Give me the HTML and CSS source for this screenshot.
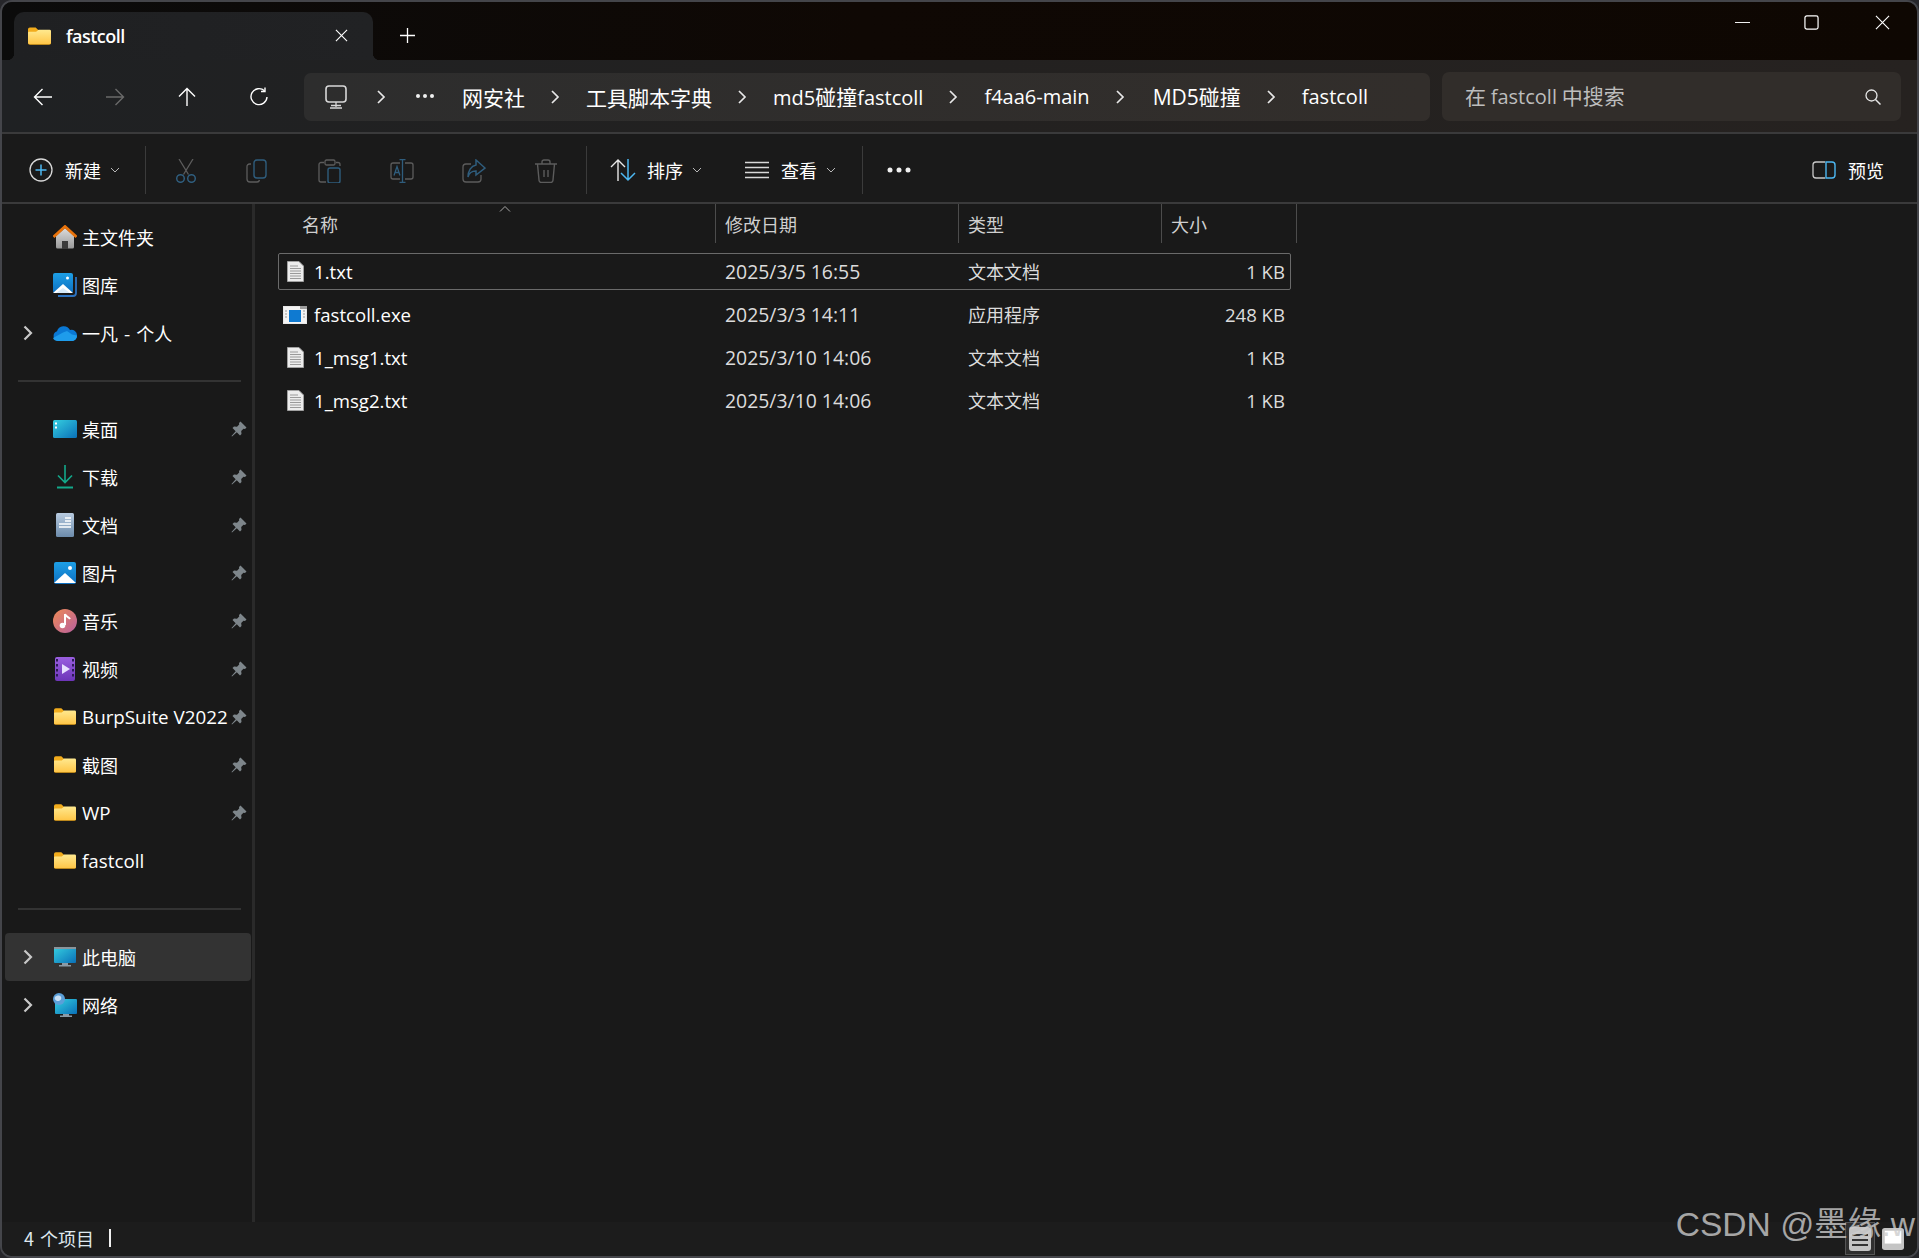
FILE: index.html
```html
<!DOCTYPE html>
<html lang="zh-CN">
<head>
<meta charset="utf-8">
<title>fastcoll</title>
<link rel="stylesheet" href="styles.css">
</head>
<body>
<svg class="defs" aria-hidden="true">
  <defs>
    <linearGradient id="gFolder" x1="0" y1="0" x2="0" y2="1"><stop offset="0" stop-color="#ffe98f"/><stop offset="1" stop-color="#ffc648"/></linearGradient>
    <linearGradient id="gHome" x1="0" y1="0" x2="0" y2="1"><stop offset="0" stop-color="#dcdcdc"/><stop offset="1" stop-color="#9a9a9a"/></linearGradient>
    <linearGradient id="gBlue" x1="0" y1="0" x2="0" y2="1"><stop offset="0" stop-color="#1d9fe6"/><stop offset="1" stop-color="#0d6fc0"/></linearGradient>
    <linearGradient id="gDesk" x1="0" y1="0" x2="1" y2="1"><stop offset="0" stop-color="#35cfe0"/><stop offset="1" stop-color="#0a70b8"/></linearGradient>
    <linearGradient id="gDoc" x1="0" y1="0" x2="0" y2="1"><stop offset="0" stop-color="#b8cbe0"/><stop offset="1" stop-color="#6c8bab"/></linearGradient>
    <linearGradient id="gMusic" x1="0" y1="0" x2="1" y2="1"><stop offset="0" stop-color="#ee8a55"/><stop offset="1" stop-color="#b85f9f"/></linearGradient>
    <linearGradient id="gVideo" x1="0" y1="0" x2="0" y2="1"><stop offset="0" stop-color="#9a5fe0"/><stop offset="1" stop-color="#6d35b8"/></linearGradient>
    <symbol id="folder" viewBox="0 0 24 18">
      <path d="M0 2a2 2 0 0 1 2-2h6l3 3h11a2 2 0 0 1 2 2v11a2 2 0 0 1-2 2H2a2 2 0 0 1-2-2z" fill="#f2ac1c"/>
      <path d="M0 5.500q0-1 1-1h7.500l2.500-2h11.500q1.500 0 1.500 1.500V16a1.500 1.500 0 0 1-1.500 1.300H1.500A1.500 1.500 0 0 1 0 16z" fill="url(#gFolder)"/>
    </symbol>
    <symbol id="pin" viewBox="0 0 16 16">
      <path d="M9.500.5l6 6L14 8l-1.500-.2-2.300 2.200.3 3L9 14.500l-3.200-3.200L1 15.500l-.5-.5 4.200-4.800L1.500 7 3 5.500l3 .3 2.200-2.300L8 2z" fill="#7e868b"/>
    </symbol>
    <symbol id="doc" viewBox="0 0 17 21">
      <path d="M.5.500h11.500l4.500 4.500v15.500H.5z" fill="#ececec" stroke="#a0a0a0"/>
      <path d="M3 5h8M3 7.500h11M3 10h11M3 12.500h11M3 15h11M3 17.500h11" stroke="#9a9a9a"/>
    </symbol>
    <symbol id="chev" viewBox="0 0 10 16"><path d="M2 2l6 6-6 6" fill="none" stroke="currentColor" stroke-width="1.700"/></symbol>
    <symbol id="chevb" viewBox="0 0 10 16"><path d="M1.500 1.500l6.500 6.500-6.500 6.500" fill="none" stroke="currentColor" stroke-width="2.200"/></symbol>
    <symbol id="drop" viewBox="0 0 10 6"><path d="M1 1l4 4 4-4" fill="none" stroke="currentColor" stroke-width="1"/></symbol>
  </defs>
</svg>

<div class="window">
  <header class="tabstrip">
    <div class="tab">
      <svg class="tab-folder"><use href="#folder"/></svg>
      <span class="tab-title">fastcoll</span>
      <svg class="tab-close" viewBox="0 0 14 14"><path d="M1 1l12 12M13 1L1 13" stroke="#fff" stroke-width="1.200"/></svg>
    </div>
    <svg class="tab-plus" viewBox="0 0 16 16"><path d="M8 0v16M0 8h16" stroke="#fff" stroke-width="1.400"/></svg>
    <div class="winctl">
      <svg class="wc" viewBox="0 0 16 16"><path d="M0 8h16" stroke="#fff" stroke-width="1"/></svg>
      <svg class="wc wc-max" viewBox="0 0 16 16"><rect x="1" y="1" width="14" height="14" rx="2" fill="none" stroke="#fff" stroke-width="1.300"/></svg>
      <svg class="wc" viewBox="0 0 16 16"><path d="M1 1l14 14M15 1L1 15" stroke="#fff" stroke-width="1.200"/></svg>
    </div>
  </header>

  <nav class="navrow">
    <div class="navbtns">
      <svg class="nav" viewBox="0 0 20 20"><path d="M19 10H1.500M9.500 2l-8 8 8 8" fill="none" stroke="#fff" stroke-width="1.400"/></svg>
      <svg class="nav" viewBox="0 0 20 20"><path d="M1 10h17.500M10.500 2l8 8-8 8" fill="none" stroke="#6a6a6a" stroke-width="1.400"/></svg>
      <svg class="nav" viewBox="0 0 20 20"><path d="M10 19V1.500M2 9.500l8-8 8 8" fill="none" stroke="#fff" stroke-width="1.400"/></svg>
      <svg class="nav" viewBox="0 0 20 20"><path d="M15.500 3.800A8 8 0 1 0 18 10" fill="none" stroke="#fff" stroke-width="1.400"/><path d="M16 .5v4h-4" fill="none" stroke="#fff" stroke-width="1.400"/></svg>
    </div>
    <div class="addr">
      <svg class="addr-pc" viewBox="0 0 22 24"><rect x="1" y="1" width="20" height="16" rx="3" fill="none" stroke="#d8d8d8" stroke-width="1.600"/><path d="M11 17v5M5 23h12M6 20.500h10" stroke="#d8d8d8" stroke-width="1.300"/></svg>
      <svg class="crumb-chev"><use href="#chev"/></svg>
      <svg class="addr-dots" viewBox="0 0 18 4"><circle cx="2" cy="2" r="2" fill="#f0f0f0"/><circle cx="9" cy="2" r="2" fill="#f0f0f0"/><circle cx="16" cy="2" r="2" fill="#f0f0f0"/></svg>
      <span class="crumb">网安社</span>
      <svg class="crumb-chev"><use href="#chev"/></svg>
      <span class="crumb">工具脚本字典</span>
      <svg class="crumb-chev"><use href="#chev"/></svg>
      <span class="crumb"><span class="lat-l">md5</span>碰撞<span class="lat-l">fastcoll</span></span>
      <svg class="crumb-chev"><use href="#chev"/></svg>
      <span class="crumb lat-l">f4aa6-main</span>
      <svg class="crumb-chev"><use href="#chev"/></svg>
      <span class="crumb crumb-md"><span class="lat-m">MD5</span>碰撞</span>
      <svg class="crumb-chev"><use href="#chev"/></svg>
      <span class="crumb lat-l">fastcoll</span>
    </div>
    <div class="search">
      <span class="search-text">在 <span class="lat-l">fastcoll</span> 中搜索</span>
      <svg class="search-ic" viewBox="0 0 16 16"><circle cx="6.500" cy="6.500" r="5.500" fill="none" stroke="#e6e6e6" stroke-width="1.300"/><path d="M10.500 10.500l5 5" stroke="#e6e6e6" stroke-width="1.500"/></svg>
    </div>
  </nav>

  <div class="toolbar">
    <div class="tb-new">
      <svg class="tb-ic-new" viewBox="0 0 24 24"><circle cx="12" cy="12" r="11" fill="none" stroke="#d8d8d8" stroke-width="1.300"/><path d="M12 6.500v11M6.500 12h11" stroke="#4db8f2" stroke-width="1.500"/></svg>
      <span class="tb-label">新建</span>
      <svg class="tb-drop"><use href="#drop"/></svg>
    </div>
    <span class="tb-sep"></span>
    <div class="tb-icons">
      <svg class="tb-ic" viewBox="0 0 24 24"><path d="M5 0l9.500 15.500M19 0L9.500 15.500" stroke="#5c5c5c" stroke-width="1.300"/><circle cx="6.500" cy="19.500" r="3.800" fill="none" stroke="#2f5d7d" stroke-width="1.500"/><circle cx="17.500" cy="19.500" r="3.800" fill="none" stroke="#2f5d7d" stroke-width="1.500"/></svg>
      <svg class="tb-ic" viewBox="0 0 24 24"><path d="M5 5H3.500A2.500 2.500 0 0 0 1 7.500V20a3 3 0 0 0 3 3h7a2.500 2.500 0 0 0 2.500-2" fill="none" stroke="#5c5c5c" stroke-width="1.300"/><rect x="8" y="1" width="12" height="18" rx="3" fill="none" stroke="#2f5d7d" stroke-width="1.400"/></svg>
      <svg class="tb-ic" viewBox="0 0 24 24"><path d="M6 3.500H3a2 2 0 0 0-2 2V21a2 2 0 0 0 2 2h5M18 3.500h2a2 2 0 0 1 2 2V7" fill="none" stroke="#5c5c5c" stroke-width="1.300"/><rect x="7" y="1" width="10" height="5" rx="1.500" fill="none" stroke="#5c5c5c" stroke-width="1.300"/><rect x="10" y="9" width="12" height="15" rx="2" fill="none" stroke="#2f5d7d" stroke-width="1.400"/></svg>
      <svg class="tb-ic" viewBox="0 0 24 24"><path d="M10 4H3a2 2 0 0 0-2 2v12a2 2 0 0 0 2 2h7M15 4h6a2 2 0 0 1 2 2v12a2 2 0 0 1-2 2h-6" fill="none" stroke="#5c5c5c" stroke-width="1.300"/><path d="M12.500 1v22M9.500 .700h6M9.500 23.300h6" stroke="#2f5d7d" stroke-width="1.300"/><path d="M4 16.500L7 7.500l3 9M5 13.500h4" fill="none" stroke="#2f5d7d" stroke-width="1.300"/></svg>
      <svg class="tb-ic" viewBox="0 0 24 24"><path d="M9 5H4a3 3 0 0 0-3 3v12a3 3 0 0 0 3 3h12a3 3 0 0 0 3-3v-4" fill="none" stroke="#5c5c5c" stroke-width="1.300"/><path d="M14 1l9 8-9 7v-4c-4 0-7 2-8 6 0-6 3-11 8-12z" fill="none" stroke="#2f5d7d" stroke-width="1.500"/></svg>
      <svg class="tb-ic" viewBox="0 0 24 24"><path d="M1 5h22M8 5V3a2 2 0 0 1 2-2h4a2 2 0 0 1 2 2v2M3.500 5l1.500 16a2.500 2.500 0 0 0 2.500 2.500h9a2.500 2.500 0 0 0 2.500-2.500L20.500 5M10 11v7M14 11v7" fill="none" stroke="#5c5c5c" stroke-width="1.400"/></svg>
    </div>
    <span class="tb-sep tb-sep2"></span>
    <div class="tb-sort">
      <svg class="tb-ic-sort" viewBox="0 0 26 24"><path d="M8 23V2M1 9l7-7 7 7" fill="none" stroke="#e8e8e8" stroke-width="1.400"/><path d="M18 1v21M11 15l7 7 7-7" fill="none" stroke="#4db8f2" stroke-width="1.500"/></svg>
      <span class="tb-label">排序</span>
      <svg class="tb-drop"><use href="#drop"/></svg>
    </div>
    <div class="tb-view">
      <svg class="tb-ic-view" viewBox="0 0 24 18"><path d="M0 1.500h24M0 6.500h24M0 11.500h24M0 16.500h24" stroke="#d8d8d8" stroke-width="1.600"/></svg>
      <span class="tb-label">查看</span>
      <svg class="tb-drop"><use href="#drop"/></svg>
    </div>
    <span class="tb-sep tb-sep3"></span>
    <svg class="tb-more" viewBox="0 0 24 6"><circle cx="3" cy="3" r="2.500" fill="#f0f0f0"/><circle cx="12" cy="3" r="2.500" fill="#f0f0f0"/><circle cx="21" cy="3" r="2.500" fill="#f0f0f0"/></svg>
    <div class="tb-preview">
      <svg class="tb-ic-prev" viewBox="0 0 24 18"><path d="M13 1H4a3 3 0 0 0-3 3v10a3 3 0 0 0 3 3h9" fill="none" stroke="#c8c8c8" stroke-width="1.300"/><path d="M14 1h6a3 3 0 0 1 3 3v10a3 3 0 0 1-3 3h-6z" fill="none" stroke="#4db8f2" stroke-width="1.400"/></svg>
      <span class="tb-label">预览</span>
    </div>
  </div>

  <div class="body">
    <aside class="side">
      <div class="srow">
        <svg class="sic" viewBox="0 0 24 24"><path d="M3 11l9-8 9 8v11a1.500 1.500 0 0 1-1.500 1.500h-15A1.500 1.500 0 0 1 3 22z" fill="url(#gHome)"/><path d="M9 24v-8h6v8z" fill="#3b3b3b"/><path d="M.5 12L12 1.500 23.500 12" fill="none" stroke="#e8730c" stroke-width="2.800"/></svg>
        <span>主文件夹</span>
      </div>
      <div class="srow">
        <svg class="sic" viewBox="0 0 24 24"><path d="M5 23h15a3 3 0 0 0 3-3V4" fill="none" stroke="#2c72c0" stroke-width="1.800"/><rect x="0" y="0" width="20" height="20" rx="2" fill="url(#gBlue)"/><path d="M0 20l10-9 10 9z" fill="#fff"/><path d="M3 20l7-5 7 5z" fill="#d8ebfa"/><circle cx="14.500" cy="5" r="1.500" fill="#fff"/></svg>
        <span>图库</span>
      </div>
      <div class="srow">
        <svg class="schev"><use href="#chevb"/></svg>
        <svg class="sic sic-cloud" viewBox="0 0 24 16"><path d="M5 16a5 5 0 0 1-1-9.700A7 7 0 0 1 17 5a5.500 5.500 0 0 1 7 5.500A5.500 5.500 0 0 1 19 16z" fill="#0a78d4"/><path d="M5 16c-2.500 0-4.300-1.200-5-3l10-5.500 4-1.500 5 3.500 5 1c0 3-2 5.500-5 5.500z" fill="#1e9ceb"/></svg>
        <span class="spaced">一凡 - 个人</span>
      </div>
      <div class="ssep"></div>
      <div class="srow">
        <svg class="sic sic-desk" viewBox="0 0 24 18"><rect width="24" height="18" rx="1.500" fill="url(#gDesk)"/><path d="M2 2.500h2v2H2zM2 6.500h2v2H2z" fill="#fff"/></svg>
        <span>桌面</span>
        <svg class="spin"><use href="#pin"/></svg>
      </div>
      <div class="srow">
        <svg class="sic" viewBox="0 0 24 24"><path d="M12 0v17M5 10.500l7 7 7-7" fill="none" stroke="#13a88a" stroke-width="1.600"/><path d="M4 22.500h16" stroke="#13a88a" stroke-width="2"/></svg>
        <span>下载</span>
        <svg class="spin"><use href="#pin"/></svg>
      </div>
      <div class="srow">
        <svg class="sic" viewBox="0 0 24 24"><rect x="3" y="0" width="18" height="24" rx="1.500" fill="url(#gDoc)"/><path d="M12 5h6M12 8h6M6 11h12M6 14h12" stroke="#fff" stroke-width="1.500"/></svg>
        <span>文档</span>
        <svg class="spin"><use href="#pin"/></svg>
      </div>
      <div class="srow">
        <svg class="sic sic-pic" viewBox="0 0 22 22"><rect width="22" height="22" rx="2" fill="url(#gBlue)"/><path d="M0 21l11-10 11 10z" fill="#fff"/><circle cx="16" cy="6" r="2" fill="#fff"/></svg>
        <span>图片</span>
        <svg class="spin"><use href="#pin"/></svg>
      </div>
      <div class="srow">
        <svg class="sic" viewBox="0 0 24 24"><circle cx="12" cy="12" r="12" fill="url(#gMusic)"/><path d="M12 5v11M12 5c1 3 4 3 5 5" fill="none" stroke="#fff" stroke-width="2"/><circle cx="9.500" cy="16.500" r="2.800" fill="#fff"/></svg>
        <span>音乐</span>
        <svg class="spin"><use href="#pin"/></svg>
      </div>
      <div class="srow">
        <svg class="sic sic-vid" viewBox="0 0 20 24"><rect width="20" height="24" rx="2" fill="url(#gVideo)"/><path d="M1 2h2v2.500H1zM1 7h2v2.500H1zM1 12h2v2.500H1zM1 17h2v2.500H1zM17 2h2v2.500h-2zM17 7h2v2.500h-2zM17 12h2v2.500h-2zM17 17h2v2.500h-2z" fill="#2b1a55"/><path d="M7 7l8 5-8 5z" fill="#e8e0ff"/></svg>
        <span>视频</span>
        <svg class="spin"><use href="#pin"/></svg>
      </div>
      <div class="srow">
        <svg class="sfolder"><use href="#folder"/></svg>
        <span class="lat">BurpSuite V2022</span>
        <svg class="spin"><use href="#pin"/></svg>
      </div>
      <div class="srow">
        <svg class="sfolder"><use href="#folder"/></svg>
        <span>截图</span>
        <svg class="spin"><use href="#pin"/></svg>
      </div>
      <div class="srow">
        <svg class="sfolder"><use href="#folder"/></svg>
        <span class="lat">WP</span>
        <svg class="spin"><use href="#pin"/></svg>
      </div>
      <div class="srow">
        <svg class="sfolder"><use href="#folder"/></svg>
        <span class="lat">fastcoll</span>
      </div>
      <div class="ssep"></div>
      <div class="srow srow-sel">
        <svg class="schev"><use href="#chevb"/></svg>
        <svg class="sic sic-pc" viewBox="0 0 22 20"><rect width="22" height="16" rx="1" fill="url(#gDesk)"/><path d="M0 1h22" stroke="#8a959c" stroke-width="2"/><path d="M8 16h6v2h3v1.500H5V18h3z" fill="#8a9aa6"/></svg>
        <span>此电脑</span>
      </div>
      <div class="srow">
        <svg class="schev"><use href="#chevb"/></svg>
        <svg class="sic" viewBox="0 0 24 24"><rect x="2" y="6" width="22" height="15" rx="1" fill="url(#gDesk)"/><path d="M10 21h6v1.500h3V24H7v-1.500h3z" fill="#8a9aa6"/><circle cx="6" cy="6" r="6" fill="#5b9fd8"/><path d="M2 4c2-2 5-2 6 0s-1 4-3 4-4-2-3-4z" fill="#c8e0f5"/></svg>
        <span>网络</span>
      </div>
    </aside>

    <main class="main">
      <div class="thead">
        <div class="th th-name">名称<svg class="sort-caret" viewBox="0 0 12 6"><path d="M1 5.500l5-5 5 5" fill="none" stroke="#a8a8a8" stroke-width="1"/></svg></div>
        <div class="th">修改日期</div>
        <div class="th">类型</div>
        <div class="th">大小</div>
      </div>
      <div class="rows">
        <div class="row row-focus">
          <div class="c-name"><svg class="fic"><use href="#doc"/></svg><span class="lat-n">1.txt</span></div>
          <div class="lat-d">2025/3/5 16:55</div>
          <div class="c-type">文本文档</div>
          <div class="c-size lat-n">1 KB</div>
        </div>
        <div class="row">
          <div class="c-name"><svg class="fic-exe" viewBox="0 0 24 18"><rect width="24" height="18" fill="#e8e8e8"/><rect x="1" y="1" width="22" height="16" fill="#f4f4f4"/><rect x="6" y="4" width="12" height="12" fill="#0f7ad1"/><path d="M17 0h7v3h-7z" fill="#9e9e9e"/><path d="M2 5h2M2 8h2M2 11h2M20 5h2M20 8h2M20 11h2" stroke="#9a9a9a"/></svg><span class="lat-n">fastcoll.exe</span></div>
          <div class="lat-d">2025/3/3 14:11</div>
          <div class="c-type">应用程序</div>
          <div class="c-size lat-n">248 KB</div>
        </div>
        <div class="row">
          <div class="c-name"><svg class="fic"><use href="#doc"/></svg><span class="lat-n">1_msg1.txt</span></div>
          <div class="lat-d">2025/3/10 14:06</div>
          <div class="c-type">文本文档</div>
          <div class="c-size lat-n">1 KB</div>
        </div>
        <div class="row">
          <div class="c-name"><svg class="fic"><use href="#doc"/></svg><span class="lat-n">1_msg2.txt</span></div>
          <div class="lat-d">2025/3/10 14:06</div>
          <div class="c-type">文本文档</div>
          <div class="c-size lat-n">1 KB</div>
        </div>
      </div>
    </main>
  </div>

  <footer class="status">
    <span class="status-text">4 个项目</span>
    <span class="status-bar"></span>
  </footer>

  <div class="viewtoggle">
    <span class="vt vt-on"><svg viewBox="0 0 22 24" class="vt-ic"><rect width="22" height="24" rx="3" fill="#c4c4c4"/><path d="M3 8h16M3 13h16M3 18h16" stroke="#333" stroke-width="2"/></svg></span>
    <span class="vt"><svg viewBox="0 0 24 24" class="vt-ic"><rect width="24" height="24" rx="3" fill="#c4c4c4"/><rect x="3" y="3" width="18" height="14" fill="#fff"/></svg></span>
  </div>
  <div class="watermark">CSDN @墨缘.w</div>
</div>
</body>
</html>
```

FILE: styles.css
```css
* { box-sizing: border-box; }
html, body { margin: 0; padding: 0; background: #26262a; }
body {
  width: 1919px;
  height: 1258px;
  overflow: hidden;
  font-family: "Noto Sans CJK SC", "Open Sans", sans-serif;
  font-size: 18px;
  color: #fff;
}
.defs { position: absolute; width: 0; height: 0; }

.window {
  position: relative;
  width: 1919px;
  height: 1258px;
  display: flex;
  flex-direction: column;
  background: #191919;
  border: 2px solid #44454a;
  border-radius: 12px;
  overflow: hidden;
}

.lat, .lat-l, .lat-m, .lat-n, .lat-d { font-family: "Open Sans", "Noto Sans CJK SC", sans-serif; }
.lat { font-size: 18.8px; }
.lat-n { font-size: 18.6px; }
.lat-d { font-size: 19.4px; }
.lat-l { font-size: 20px; }
.lat-m { font-size: 21px; }

/* tab strip */
.tabstrip {
  flex: 0 0 58px;
  display: flex;
  align-items: flex-end;
  background: linear-gradient(90deg, #0b0b0b 0%, #0f0804 45%, #0e0702 100%);
  padding-left: 12px;
}
.tab {
  position: relative;
  width: 359px;
  height: 48px;
  display: flex;
  align-items: center;
  background: linear-gradient(90deg, #1f2022, #212224);
  border-radius: 10px 10px 0 0;
  padding-left: 14px;
}
.tab::before, .tab::after {
  content: "";
  position: absolute;
  bottom: 0;
  width: 7px;
  height: 7px;
}
.tab::before { right: 100%; background: radial-gradient(circle at 0 0, transparent 7px, #1f2022 7.5px); }
.tab::after { left: 100%; background: radial-gradient(circle at 100% 0, transparent 7px, #212224 7.5px); }
.tab-folder { width: 23px; height: 18px; margin-top: -1px; }
.tab-title { margin-left: 15px; font-family: "Open Sans", sans-serif; font-size: 18px; font-weight: 600; line-height: 24px; letter-spacing: -.5px; width: 269px; }
.tab-close { width: 13px; height: 13px; margin-top: -1px; }
.tab-plus { width: 15px; height: 15px; margin: 0 0 17px 27px; }
.winctl {
  margin-left: auto;
  align-self: flex-start;
  display: flex;
  margin-top: 13px;
  padding-right: 27px;
}
.wc { width: 15px; height: 15px; display: block; }
.wc-max { margin: 0 56px 0 54px; }

/* nav */
.navrow {
  flex: 0 0 72px;
  display: flex;
  align-items: center;
  background: linear-gradient(90deg, #1f2123 0%, #232120 50%, #262220 100%);
  padding-left: 31px;
}
.navbtns { display: flex; gap: 52px; width: 271px; margin-top: 1px; }
.nav { width: 20px; height: 20px; display: block; }
.addr {
  width: 1126px;
  height: 48px;
  margin-top: 2px;
  display: flex;
  align-items: center;
  padding-left: 21px;
  background: linear-gradient(90deg, #2d2d2d, #322e2b);
  border-radius: 7px;
  font-size: 21px;
  line-height: 28px;
  white-space: nowrap;
}
.addr-pc { width: 22px; height: 24px; flex: none; }
.crumb-chev { width: 10px; height: 16px; flex: none; color: #e8e8e8; margin: 0 26px 0 25px; }
.addr-pc + .crumb-chev { margin: 0 30px 0 29px; }
.addr-dots { width: 18px; height: 4px; flex: none; margin-right: 28px; margin-top: -2px; }
.crumb { color: #fff; flex: none; margin-top: -1px; }
.crumb-md { margin-left: 2px; }
.search {
  width: 459px;
  height: 49px;
  margin-left: 12px;
  display: flex;
  align-items: center;
  justify-content: space-between;
  padding: 0 20px 0 23px;
  background: #312d2a;
  border-radius: 7px;
  font-size: 21px;
  color: #bdbdbd;
  line-height: 28px;
}
.search-ic { width: 16px; height: 16px; margin-top: 1px; }

/* toolbar */
.toolbar {
  flex: 0 0 72px;
  display: flex;
  align-items: center;
  padding: 3px 0 0 27px;
  background: #1a1a1a;
  border-top: 2px solid #3a3a3b;
  border-bottom: 2px solid #3a3a3b;
  font-size: 18px;
}
.tb-label { line-height: 24px; white-space: nowrap; }
.tb-new, .tb-sort, .tb-view, .tb-preview { display: flex; align-items: center; }
.tb-ic-new { width: 24px; height: 24px; margin-right: 12px; }
.tb-drop { width: 10px; height: 6px; margin-left: 9px; color: #b8b8b8; }
.tb-sep { width: 1px; height: 48px; background: #3b3b3b; flex: none; margin-left: 25px; }
.tb-icons { display: flex; gap: 48px; margin: 2px 0 0 28px; }
.tb-ic { width: 24px; height: 24px; display: block; }
.tb-sep2 { margin-left: 28px; }
.tb-sort { margin-left: 23px; }
.tb-ic-sort { width: 26px; height: 24px; margin-right: 11px; }
.tb-view { margin-left: 43px; }
.tb-ic-view { width: 24px; height: 18px; margin-right: 12px; }
.tb-sep3 { margin-left: 26px; }
.tb-more { width: 24px; height: 6px; margin-left: 24px; }
.tb-preview { margin-left: auto; padding-right: 33px; }
.tb-ic-prev { width: 24px; height: 18px; margin-right: 12px; }

/* body */
.body { flex: 1; display: flex; min-height: 0; }
.side {
  width: 253px;
  flex: none;
  padding: 9px 0 0 3px;
  border-right: 3px solid #2a2a2a;
  color: #fff;
}
.srow {
  position: relative;
  height: 48px;
  width: 246px;
  display: flex;
  align-items: center;
  padding-left: 77px;
  line-height: 24px;
  white-space: nowrap;
}
.srow > span:not(.lat) { margin-top: -1px; }
.spaced { word-spacing: 2px; }
.srow-sel { background: #333; border-radius: 4px; }
.sic, .sfolder { position: absolute; }
.sic { left: 48px; top: 12px; width: 24px; height: 24px; }
.sic-cloud { top: 16px; height: 16px; }
.sic-desk { top: 15px; height: 18px; }
.sic-pic { left: 49px; top: 13px; width: 22px; height: 22px; }
.sic-vid { left: 50px; width: 20px; }
.sic-pc { left: 49px; top: 14px; width: 22px; height: 20px; }
.sfolder { left: 49px; top: 15px; width: 22px; height: 17px; }
.schev { position: absolute; left: 18px; top: 16px; width: 10px; height: 16px; color: #c8c8c8; }
.spin { position: absolute; left: 226px; top: 16px; width: 16px; height: 16px; }
.ssep { height: 48px; display: flex; align-items: center; padding: 0 0 0 13px; width: 236px; }
.ssep::before { content: ""; display: block; width: 100%; height: 2px; background: #333; }

/* list */
.main { flex: 1; min-width: 0; }
.thead { display: grid; grid-template-columns: 461px 243px 203px 135px; height: 39px; color: #cfcfcf; }
.th { position: relative; display: flex; align-items: center; padding-left: 9px; border-right: 1px solid #4c4c4c; line-height: 24px; }
.th-name { padding-left: 47px; }
.sort-caret { position: absolute; left: 244px; top: 2px; width: 12px; height: 6px; }
.rows { display: flex; flex-direction: column; gap: 6px; padding: 10px 0 0 23px; }
.row {
  width: 1013px;
  height: 37px;
  display: grid;
  grid-template-columns: 446px 243px 203px 1fr;
  align-items: center;
  border: 1px solid transparent;
  border-radius: 2px;
  line-height: 24px;
  color: #dcdcdc;
  white-space: nowrap;
}
.row-focus { border-color: #6a6a6a; }
.c-name { display: flex; align-items: center; color: #fff; padding-left: 8px; }
.c-type { margin-top: -2px; }
.fic { width: 17px; height: 21px; margin-right: 10px; }
.fic-exe { width: 24px; height: 18px; margin: 0 7px 0 -4px; }
.c-size { text-align: right; padding-right: 5px; }

/* status */
.status {
  flex: 0 0 34px;
  display: flex;
  align-items: center;
  padding: 0 0 3px 22px;
  background: #1c1c1c;
  color: #dfe8ef;
  font-size: 18px;
  line-height: 24px;
}
.status-text { word-spacing: 2px; }
.status-bar { width: 2px; height: 18px; background: #f0f0f0; margin-left: 15px; }

/* overlays */
.viewtoggle {
  position: absolute;
  right: 9px;
  bottom: 1px;
  display: flex;
  align-items: center;
  gap: 3px;
  height: 33px;
}
.vt { display: flex; align-items: center; justify-content: center; width: 30px; height: 33px; }
.vt-on { background: #2f2f2f; border: 1px solid #555; }
.vt-ic { width: 22px; height: 24px; }
.watermark {
  position: absolute;
  right: 2px;
  bottom: 9px;
  font-family: "Liberation Sans", "Noto Sans CJK SC", sans-serif;
  font-size: 33.6px;
  line-height: 44px;
  color: rgba(205, 205, 205, .78);
  white-space: nowrap;
}
```
